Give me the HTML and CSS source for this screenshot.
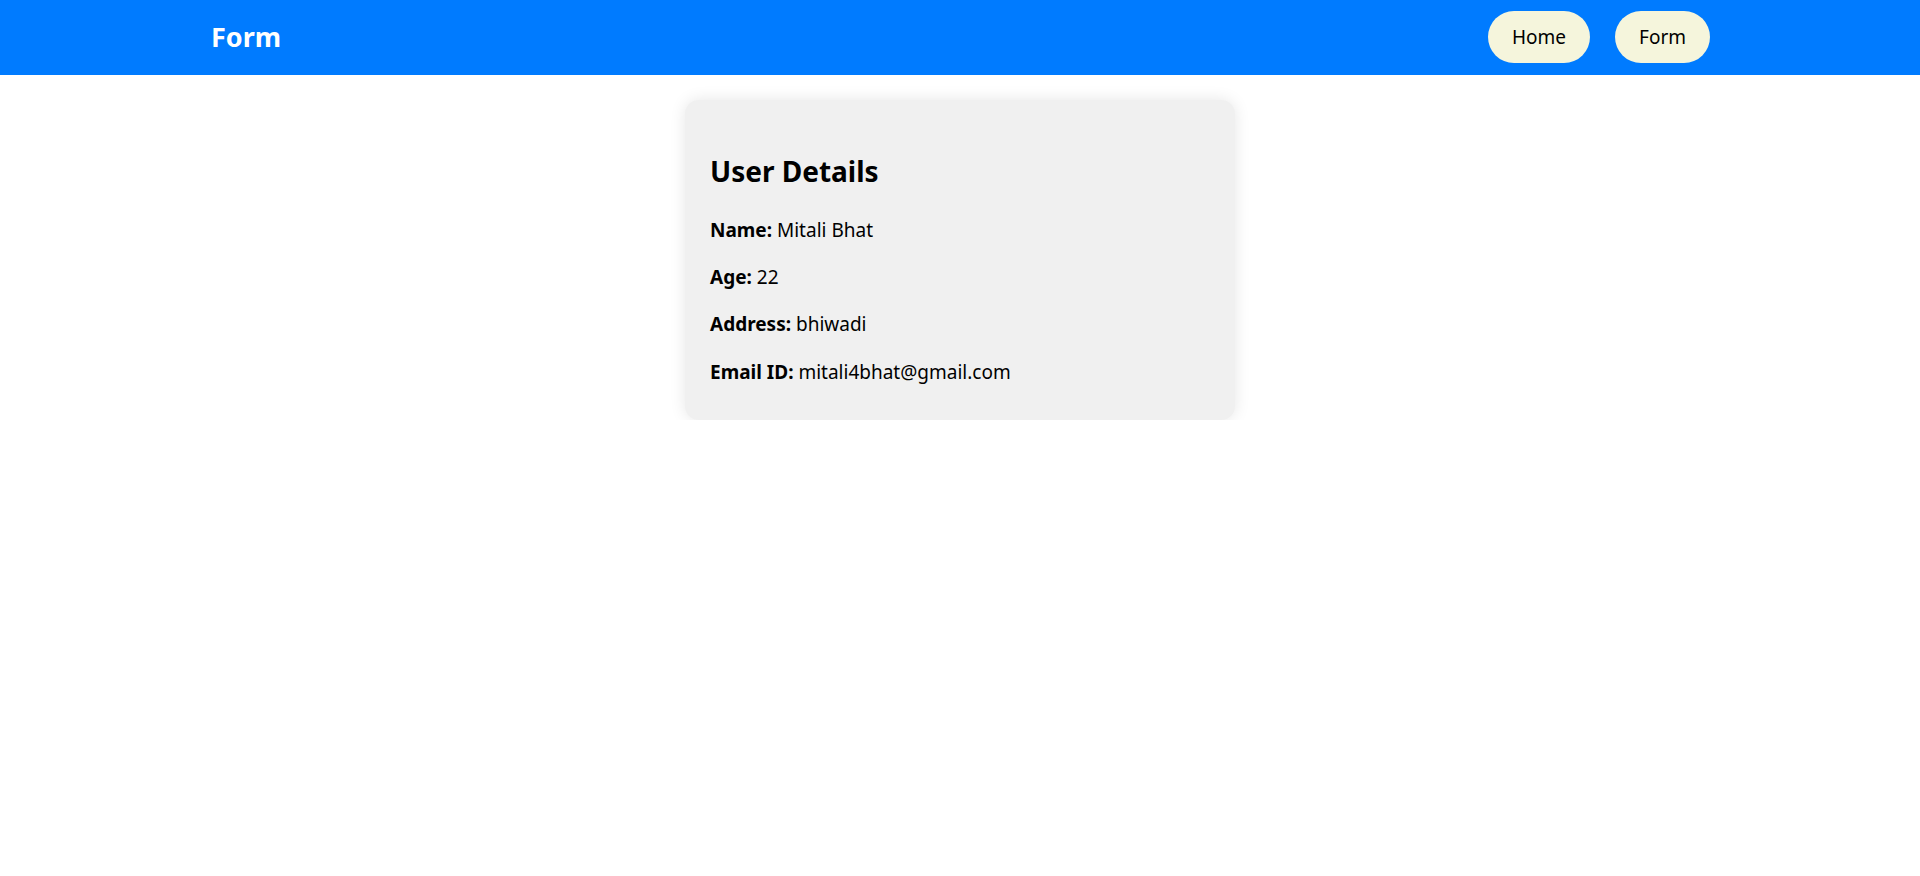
FILE: index.html
```html
<!DOCTYPE html>
<html lang="en">
<head>
<meta charset="utf-8">
<title>Form</title>
<link rel="stylesheet" href="styles.css">
</head>
<body>
<nav class="navbar">
  <div class="brand">Form</div>
  <div class="nav-links">
    <a class="nav-btn" href="#">Home</a>
    <a class="nav-btn" href="#">Form</a>
  </div>
</nav>
<main class="main">
  <section class="card">
    <h2 class="card-title">User Details</h2>
    <p class="row"><strong>Name:</strong> Mitali Bhat</p>
    <p class="row"><strong>Age:</strong> 22</p>
    <p class="row"><strong>Address:</strong> bhiwadi</p>
    <p class="row"><strong>Email ID:</strong> mitali4bhat@gmail.com</p>
  </section>
</main>
</body>
</html>
```

FILE: styles.css
```css
* { box-sizing: border-box; }
html, body { margin: 0; padding: 0; background: #fff; }
body {
  font-family: "Noto Sans", "Open Sans", sans-serif;
  color: #000;
}
.navbar {
  height: 75px;
  background: #007bff;
  display: flex;
  align-items: center;
  justify-content: space-between;
  padding: 0 210px 0 211px;
}
.brand {
  color: #fff;
  font-weight: 700;
  font-size: 27px;
  line-height: 36px;
  margin-top: -1px;
}
.nav-links {
  display: flex;
  gap: 25px;
  margin-top: -1px;
}
.nav-btn {
  display: block;
  background: #f5f5dc;
  color: #000;
  text-decoration: none;
  font-size: 19px;
  line-height: 26px;
  padding: 13px 24px;
  border-radius: 26px;
}
.main {
  display: flex;
  justify-content: center;
  padding-top: 25px;
}
.card {
  width: 550px;
  background: #f0f0f0;
  border-radius: 14px;
  box-shadow: 0 0 16px rgba(0, 0, 0, 0.1);
  padding: 22px 25px 20px;
}
.card-title {
  font-size: 28px;
  font-weight: 700;
  line-height: 40px;
  margin: 29px 0 26px;
}
.row {
  font-size: 19px;
  line-height: 26px;
  margin: 0 0 21.2px;
}
.row:last-child { margin-bottom: 15px; }
.row strong { font-weight: 700; }
```
